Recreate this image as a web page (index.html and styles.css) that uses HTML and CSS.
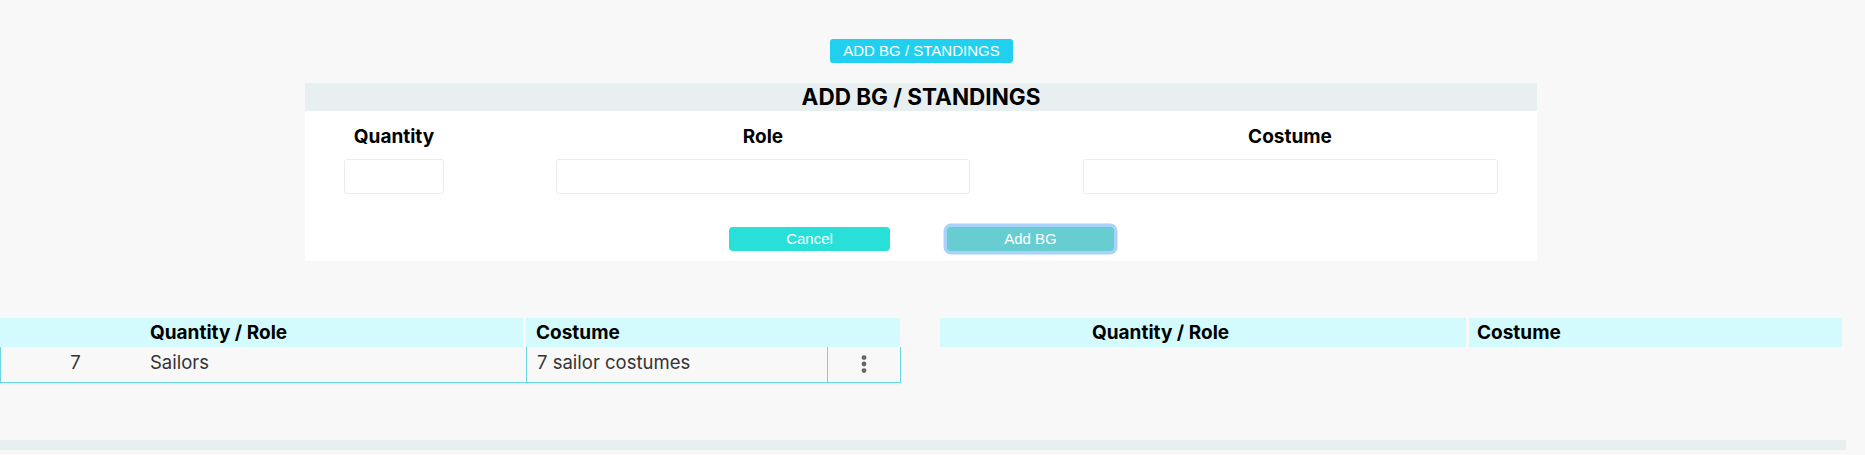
FILE: index.html
```html
<!DOCTYPE html>
<html lang="en">
<head>
<meta charset="utf-8">
<title>Add BG / Standings</title>
<link rel="stylesheet" href="styles.css">
</head>
<body>
<div class="page">
  <div class="top-bar">
    <button class="btn-open" type="button">ADD BG / STANDINGS</button>
  </div>

  <section class="panel">
    <h2 class="panel-title">ADD BG / STANDINGS</h2>
    <div class="panel-body">
      <div class="form-grid">
        <label class="lbl">Quantity</label>
        <label class="lbl">Role</label>
        <label class="lbl">Costume</label>
        <input class="field field-qty" type="text">
        <input class="field field-role" type="text">
        <input class="field field-costume" type="text">
      </div>
      <div class="actions">
        <button class="btn btn-cancel" type="button">Cancel</button>
        <button class="btn btn-add" type="button">Add BG</button>
      </div>
    </div>
  </section>

  <div class="tables">
    <div class="tbl tbl-left">
      <div class="thead">
        <div class="th th-a">Quantity / Role</div>
        <div class="th th-b">Costume</div>
      </div>
      <div class="trow">
        <div class="td td-qty">7</div>
        <div class="td td-role">Sailors</div>
        <div class="td td-costume">7 sailor costumes</div>
        <div class="td td-menu">
          <svg width="6" height="18" viewBox="0 0 6 18" aria-hidden="true">
            <circle cx="3" cy="2.6" r="2.4" fill="#666"/>
            <circle cx="3" cy="9" r="2.4" fill="#666"/>
            <circle cx="3" cy="15.6" r="2.4" fill="#666"/>
          </svg>
        </div>
      </div>
    </div>
    <div class="tbl tbl-right">
      <div class="thead">
        <div class="th th-a th-a2">Quantity / Role</div>
        <div class="th th-b th-b2">Costume</div>
      </div>
    </div>
  </div>

  <div class="hscroll"></div>
</div>
</body>
</html>
```

FILE: styles.css
```css
html, body {
  margin: 0;
  padding: 0;
  background: #f8f8f8;
}

body {
  font-family: Inter, "DejaVu Sans", sans-serif;
  color: #111;
  width: 1865px;
  height: 455px;
  overflow: hidden;
}

.page {
  display: flex;
  flex-direction: column;
}

.top-bar {
  display: flex;
  padding-top: 39px;
  padding-left: 830px;
}

.btn-open {
  width: 183px;
  height: 24px;
  border: none;
  border-radius: 3px;
  background: #22cfee;
  color: #fff;
  font-family: "Liberation Sans", Arial, sans-serif;
  font-size: 15px;
  padding: 0;
  line-height: 24px;
}

.panel {
  margin-top: 20px;
  margin-left: 305px;
  width: 1232px;
  background: #fff;
}

.panel-title {
  margin: 0;
  height: 28px;
  background: #e8eff1;
  text-align: center;
  font-size: 22.5px;
  font-weight: 700;
  line-height: 28px;
  color: #000;
}

.panel-body {
  display: flex;
  flex-direction: column;
  padding: 16px 0 10px 0;
}

.form-grid {
  display: grid;
  grid-template-columns: 178px 560px 494px;
  row-gap: 12px;
  justify-items: center;
}

.lbl {
  font-size: 19px;
  font-weight: 700;
  line-height: 20px;
  color: #000;
  text-align: center;
  white-space: nowrap;
}

.field {
  box-sizing: border-box;
  height: 35px;
  border: 1px solid #ececec;
  border-radius: 3px;
  background: #fff;
  padding: 0 8px;
  margin: 0;
}
.field-qty { width: 100px; }
.field-role { width: 414px; }
.field-costume { width: 415px; }

.actions {
  display: flex;
  gap: 57px;
  padding-left: 424px;
  margin-top: 33px;
}

.btn {
  height: 24px;
  border: none;
  border-radius: 4px;
  color: #fff;
  font-family: "Liberation Sans", Arial, sans-serif;
  font-size: 15px;
  padding: 0;
  line-height: 24px;
}
.btn-cancel {
  width: 161px;
  background: #29e0d9;
}
.btn-add {
  width: 167px;
  background: #67cdd1;
  box-shadow: 0 0 0 3.5px #a9d2fb;
}

.tables {
  display: flex;
  gap: 39px;
  margin-top: 57px;
}

.tbl {
  display: flex;
  flex-direction: column;
}
.tbl-left { width: 901px; }
.tbl-right { width: 902px; }

.thead {
  display: flex;
  gap: 3px;
  height: 29px;
}
.th {
  background: #d3fbfd;
  font-size: 19px;
  font-weight: 700;
  line-height: 29px;
  color: #000;
  white-space: nowrap;
  box-sizing: border-box;
}
.th-a {
  width: 523px;
  padding-left: 150px;
}
.th-b {
  width: 374px;
  padding-left: 10px;
}
.th-a2 {
  width: 526px;
  padding-left: 152px;
}
.th-b2 {
  width: 373px;
  padding-left: 8px;
}

.trow {
  display: flex;
  height: 36px;
  box-sizing: border-box;
  border-left: 1px solid #6ad8e0;
  border-right: 1px solid #6ad8e0;
  border-bottom: 1px solid #6ad8e0;
  box-shadow: 0 2px 2px -1px rgba(0, 0, 0, 0.08);
}
.td {
  font-size: 18.5px;
  line-height: 24px;
  color: #333;
  padding-top: 3px;
  box-sizing: border-box;
  white-space: nowrap;
}
.td-qty {
  width: 149px;
  text-align: center;
}
.td-role {
  width: 376px;
}
.td-costume {
  width: 301px;
  border-left: 1px solid #6ad8e0;
  padding-left: 10px;
}
.td-menu {
  flex: 1;
  border-left: 1px solid #6ad8e0;
  display: flex;
  justify-content: center;
  align-items: flex-start;
  padding-top: 8px;
}

.hscroll {
  margin-top: 57px;
  width: 1846px;
  height: 10px;
  background: #e8eff0;
}
```
